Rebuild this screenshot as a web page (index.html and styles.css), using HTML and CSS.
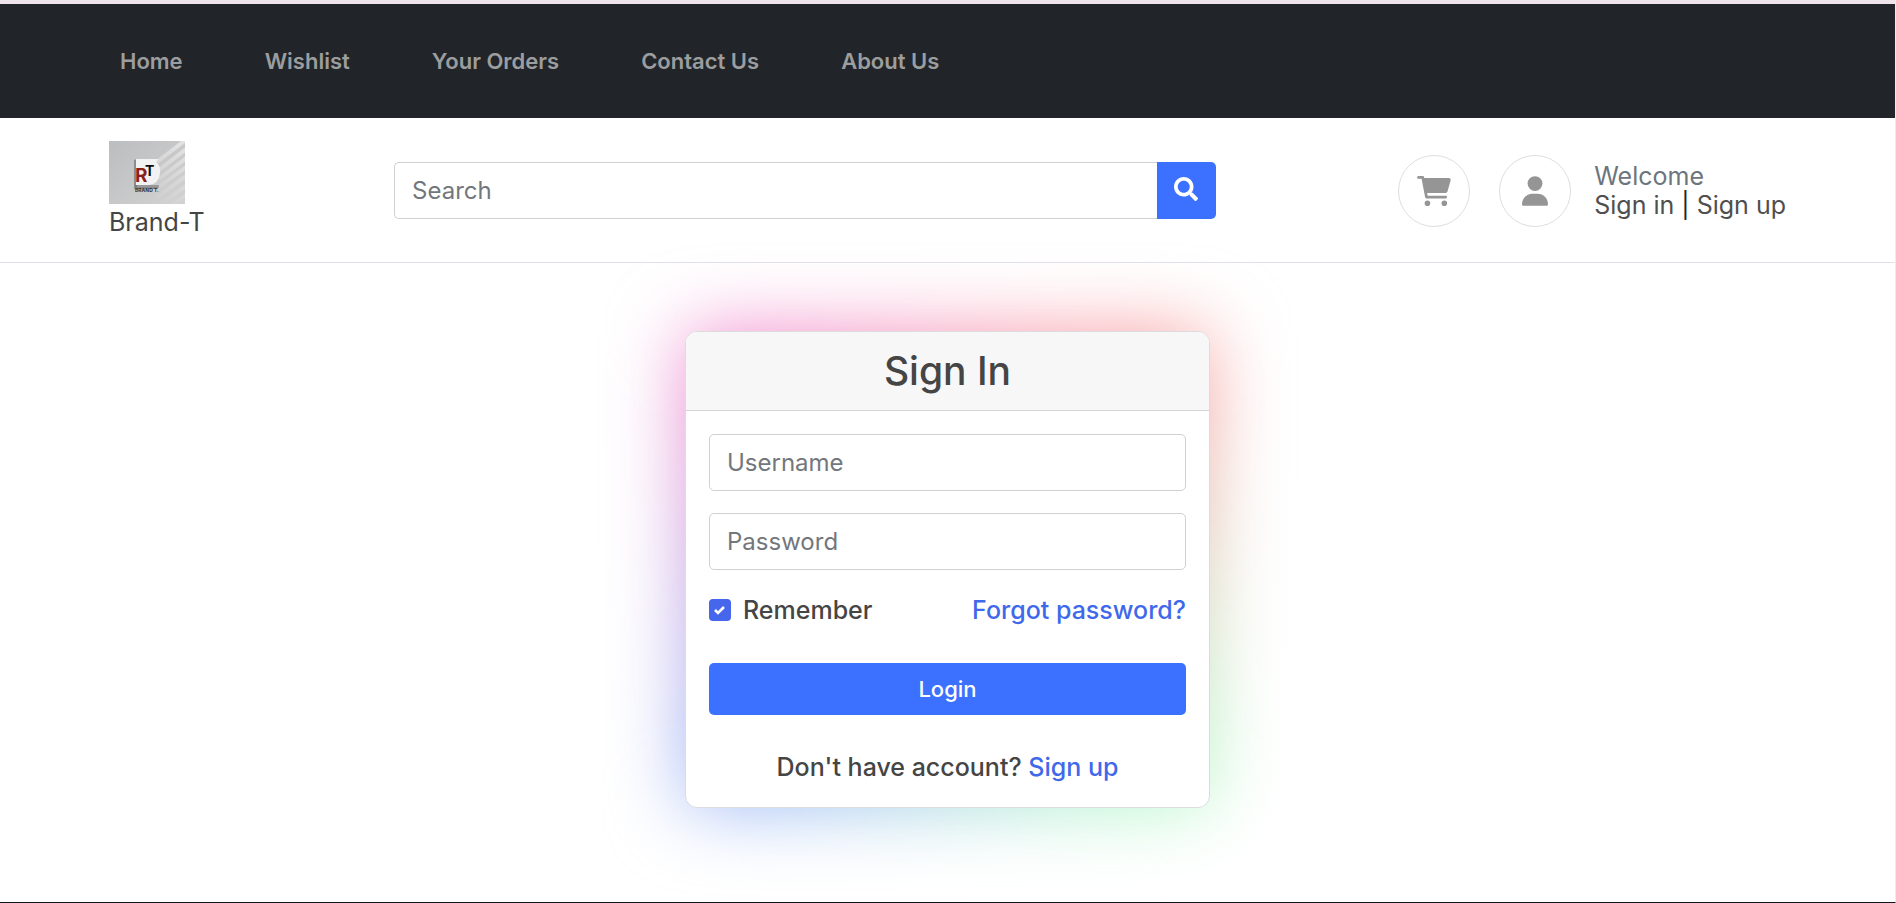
FILE: index.html
```html
<!DOCTYPE html>
<html lang="en">
<head>
<meta charset="utf-8">
<meta name="viewport" content="width=device-width, initial-scale=1">
<title>Brand-T</title>
<link rel="stylesheet" href="styles.css">
</head>
<body>
<nav class="topnav">
  <ul class="topnav-list">
    <li><a href="#">Home</a></li>
    <li><a href="#">Wishlist</a></li>
    <li><a href="#">Your Orders</a></li>
    <li><a href="#">Contact Us</a></li>
    <li><a href="#">About Us</a></li>
  </ul>
</nav>
<header class="header">
  <a class="brand" href="#">
    <svg class="brand-logo" viewBox="0 0 76 63" aria-hidden="true">
      <defs>
        <linearGradient id="wall" x1="0" y1="0" x2="1" y2="1">
          <stop offset="0" stop-color="#bcbdbf"/>
          <stop offset="1" stop-color="#d2d2d2"/>
        </linearGradient>
        <linearGradient id="ray" gradientUnits="userSpaceOnUse" x1="42" y1="60" x2="80" y2="10">
          <stop offset="0" stop-color="#e0e0e0" stop-opacity="0"/>
          <stop offset="1" stop-color="#e2e2e2"/>
        </linearGradient>
      </defs>
      <rect width="76" height="63" fill="url(#wall)"/>
      <g stroke="url(#ray)" stroke-width="4" fill="none">
        <path d="M44 24L78-2M50 29L80 6M50 38L80 15M44 50L80 24M40 62L80 33M50 64L80 43M62 65L80 52"/>
      </g>
      <path d="M25 19L28 18V46H50L48 48H25Z" fill="#8b8c8e"/>
      <path d="M27 18H50L47 21Q52 25 51 32Q50 43 40 44H27Z" fill="#f2f2f2"/>
      <path d="M26 45H50" stroke="#66676a" stroke-width="1"/>
      <text class="logo-r" x="26" y="41">R</text>
      <text class="logo-t" x="36" y="35">T</text>
      <text class="logo-name" x="26" y="51">BRAND T.</text>
    </svg>
    <span>Brand-T</span>
  </a>
  <form class="search" role="search">
    <input class="field search-field" type="search" placeholder="Search" aria-label="Search">
    <button class="search-button" type="button" aria-label="Search">
      <svg viewBox="0 0 512 512" width="24" height="24" fill="currentColor" aria-hidden="true"><path d="M505 442.7L405.3 343c-4.5-4.5-10.6-7-17-7H372c27.6-35.3 44-79.7 44-128C416 93.1 322.9 0 208 0S0 93.1 0 208s93.1 208 208 208c48.3 0 92.7-16.4 128-44v16.3c0 6.4 2.5 12.5 7 17l99.7 99.7c9.4 9.4 24.6 9.4 33.9 0l28.3-28.3c9.4-9.4 9.4-24.6.1-34zM208 336c-70.7 0-128-57.2-128-128 0-70.7 57.2-128 128-128 70.7 0 128 57.2 128 128 0 70.7-57.2 128-128 128z"/></svg>
    </button>
  </form>
  <div class="account">
    <a class="round" href="#" aria-label="Cart">
      <svg viewBox="0 0 576 512" width="34" height="30" fill="currentColor" aria-hidden="true"><path d="M0 24C0 10.700 10.700 0 24 0H96c11.500 0 21.400 8.200 23.600 19.500L122 32H541.800c21 0 36.200 20 30.400 40.200l-54 192C514.400 277.800 501.800 288 487.400 288H170.700l9.200 48H488c13.300 0 24 10.700 24 24s-10.700 24-24 24H160c-11.500 0-21.400-8.200-23.600-19.500L76.100 48H24C10.700 48 0 37.300 0 24zM128 464a48 48 0 1 1 96 0 48 48 0 1 1 -96 0zm336-48a48 48 0 1 1 0 96 48 48 0 1 1 0-96z"/></svg>
    </a>
    <a class="round" href="#" aria-label="Profile">
      <svg viewBox="0 0 448 512" width="26" height="30" fill="currentColor" aria-hidden="true"><path d="M224 256A128 128 0 1 0 224 0a128 128 0 1 0 0 256zm-45.700 48C79.800 304 0 383.800 0 482.300C0 498.700 13.300 512 29.700 512H418.300c16.400 0 29.700-13.300 29.700-29.700C448 383.800 368.200 304 269.700 304H178.300z"/></svg>
    </a>
    <div class="welcome">
      <div class="welcome-title">Welcome</div>
      <div><a href="#">Sign in</a> | <a href="#">Sign up</a></div>
    </div>
  </div>
</header>
<main class="main">
  <section class="card">
    <h1 class="card-title">Sign In</h1>
    <form class="card-body">
      <input class="field" type="text" placeholder="Username" aria-label="Username">
      <input class="field" type="password" placeholder="Password" aria-label="Password">
      <div class="options">
        <label class="remember"><input class="check" type="checkbox" checked>Remember</label>
        <a class="link" href="#">Forgot password?</a>
      </div>
      <button class="login" type="button">Login</button>
      <p class="signup">Don't have account? <a class="link" href="#">Sign up</a></p>
    </form>
  </section>
</main>
</body>
</html>
```
FILE: styles.css
```css
* {
  box-sizing: border-box;
}

body {
  margin: 0;
  min-height: 100vh;
  display: flex;
  flex-direction: column;
  border-right: 1px solid #ececec;
  border-bottom: 1px solid #10151c;
  background: #fff;
  color: #212529;
  font-family: Inter, "Noto Sans", sans-serif;
  font-size: 25px;
  line-height: 36px;
}

a {
  color: inherit;
  text-decoration: none;
}

svg {
  display: block;
}

.topnav {
  border-top: 4px solid #efe4ea;
  padding: 39px 120px;
  background: #212529;
}

.topnav-list {
  display: flex;
  gap: 82px;
  margin: 0;
  padding: 0;
  list-style: none;
  color: #9c9d9f;
  font-size: 22px;
  font-weight: 600;
}

.header {
  display: grid;
  grid-template-columns: 17fr 49fr 34fr;
  align-items: center;
  padding: 23px 109px 22px;
  border-bottom: 1px solid #dee2e6;
}

.brand {
  justify-self: start;
  color: #454545;
}

.brand-logo {
  width: 76px;
  height: 63px;
}

.logo-r,
.logo-t {
  font-weight: 700;
  font-size: 19px;
  fill: #8d1f1b;
}

.logo-t {
  font-size: 14px;
  fill: #0c0c0c;
}

.logo-name {
  font-size: 5px;
  font-weight: 700;
  fill: #333;
}

.search {
  display: flex;
}

.field {
  width: 100%;
  height: 57px;
  padding: 0 17px;
  border: 1px solid #ced0d2;
  border-radius: 5px;
  background: #fff;
  color: #212529;
  font: inherit;
  font-size: 24px;
  outline: none;
}

.field::placeholder {
  color: #73777c;
  opacity: 1;
}

.search-field {
  flex: 1;
  border-right: 0;
  border-radius: 5px 0 0 5px;
  appearance: none;
}

.search-button {
  display: grid;
  place-items: center;
  width: 59px;
  padding: 0 0 4px;
  border: 0;
  border-radius: 0 5px 5px 0;
  background: #3b71fe;
  color: #fff;
}

.account {
  display: flex;
  align-items: center;
  justify-content: flex-end;
  gap: 29px;
}

.round {
  display: grid;
  place-items: center;
  width: 72px;
  height: 72px;
  border: 1px solid #dedede;
  border-radius: 50%;
  color: #959595;
}

.welcome {
  margin-left: -6px;
  line-height: 29px;
}

.welcome a {
  color: #4f4f4f;
}

.welcome-title {
  color: #6c757d;
}

.main {
  flex: 1;
  display: flex;
  justify-content: center;
  align-items: flex-start;
  padding: 68px 24px 80px;
}

.card {
  position: relative;
  width: 100%;
  max-width: 525px;
  border: 1px solid #dcdcdf;
  border-radius: 12px;
  background: #fff;
}

/* Coloured glow behind the card */
.card::before {
  content: "";
  position: absolute;
  inset: 0;
  z-index: -1;
  background: conic-gradient(from 45deg, #f99f9f, #b3f9c7, #9bb7f7, #f189cd, #f99f9f);
  filter: blur(38px);
}

.card-title {
  margin: 0;
  padding: 16px;
  border-bottom: 1px solid #d5d6d8;
  border-radius: 11px 11px 0 0;
  background: #f7f7f7;
  color: #454545;
  font-size: 39px;
  font-weight: 500;
  line-height: 46px;
  text-align: center;
}

.card-body {
  display: flex;
  flex-direction: column;
  gap: 22px;
  padding: 23px 23px 22px;
  color: #454545;
  font-weight: 500;
}

.card-body .field {
  font-weight: 400;
}

.options {
  display: flex;
  justify-content: space-between;
}

.remember {
  display: flex;
  align-items: center;
  gap: 12px;
}

.check {
  appearance: none;
  width: 22px;
  height: 22px;
  margin: 0;
  border-radius: 4px;
  background: #4666ec url("data:image/svg+xml,%3Csvg xmlns='http://www.w3.org/2000/svg' viewBox='0 0 22 22'%3E%3Cpath d='M6 11l3 3 6-6' fill='none' stroke='white' stroke-width='2.6'/%3E%3C/svg%3E");
}

.link {
  color: #3f69ea;
}

.login {
  height: 52px;
  margin-top: 13px;
  border: 0;
  border-radius: 5px;
  background: #3b71fe;
  color: #fff;
  font: inherit;
  font-size: 22px;
}

.signup {
  margin: 12px 0 0;
  text-align: center;
}
```
